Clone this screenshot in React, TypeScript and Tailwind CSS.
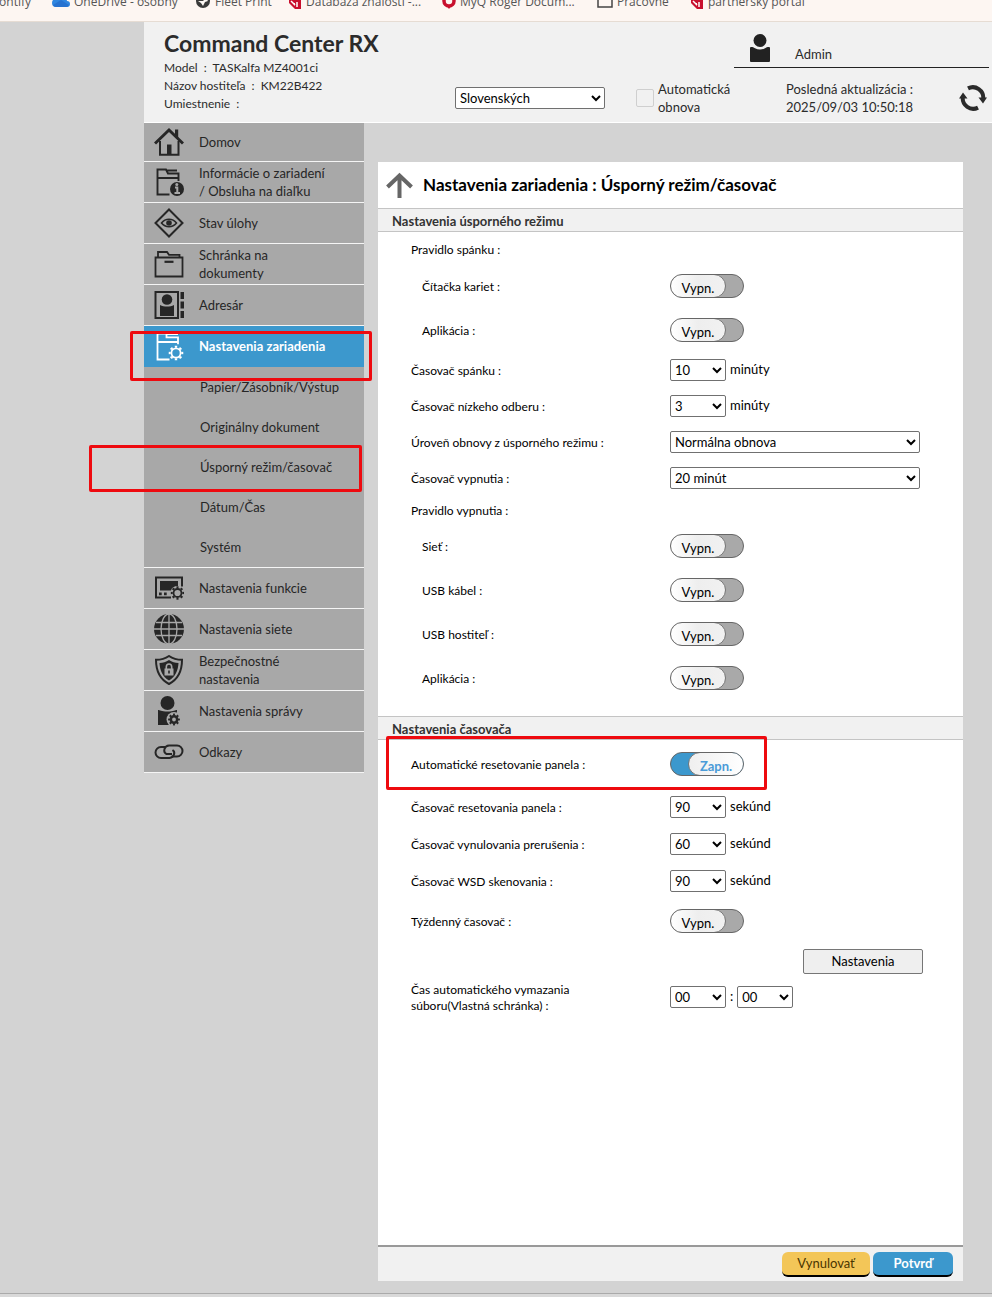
import { useState, type ReactNode } from "react";
import clsx from "clsx";

/* ---------- Icons ---------- */

// Ring with eight teeth, drawn as a dashed outer circle
function Gear({ cx, cy, r = 4.6, width = 1.8 }: { cx: number; cy: number; r?: number; width?: number }) {
  return (
    <g>
      <circle cx={cx} cy={cy} r={r} strokeWidth={width} />
      <circle cx={cx} cy={cy} r={r + 1.7} strokeWidth="2" pathLength="80" strokeDasharray="5 5" strokeDashoffset="2.5" />
    </g>
  );
}

function Icon({ children }: { children: ReactNode }) {
  return (
    <svg viewBox="0 0 30 30" className="h-[30px] w-[30px] shrink-0" fill="none" stroke="currentColor" strokeWidth="1.6" aria-hidden="true">
      {children}
    </svg>
  );
}

function HomeIcon() {
  return (
    <Icon>
      <path d="M1 16.5 15 3l14 13.5" strokeWidth="3" />
      <path d="M21 8V2.500h3.200V11" fill="currentColor" stroke="none" />
      <path d="M6 14v13.800h18.500V14" strokeWidth="2" />
      <path d="M13 17.500h4.500v10H13z" fill="currentColor" stroke="none" />
    </Icon>
  );
}

function DeviceInfoIcon() {
  return (
    <Icon>
      <path d="M15.500 27.500h-12v-25h8.500l2 4h10.500v7.500M3.500 11h21M13 3.500h10" strokeWidth="1.900" />
      <circle cx="23" cy="22" r="7" fill="currentColor" stroke="none" />
      <path d="M21 20.500h2.300v5.500M20.500 26h5.500" stroke="#a8a8a8" strokeWidth="2" />
      <circle cx="22.800" cy="17.500" r="1.500" fill="#a8a8a8" stroke="none" />
    </Icon>
  );
}

function JobStatusIcon() {
  return (
    <Icon>
      <path d="M15 1.500 28.500 15 15 28.500 1.500 15z" strokeWidth="2" />
      <path d="M7.500 15c4-5 11-5 15 0-4 5-11 5-15 0z" />
      <circle cx="15" cy="15" r="2.800" fill="currentColor" stroke="none" />
    </Icon>
  );
}

function BoxIcon() {
  return (
    <Icon>
      <path d="M1.500 8.500h27v19h-27zM4 8.500V3h9l2 2.800h10.500v2.700" strokeWidth="1.800" />
      <path d="M10.500 12.800h9" strokeWidth="2.200" />
    </Icon>
  );
}

function AddressIcon() {
  return (
    <Icon>
      <path d="M1.500 2h22.500v26H1.500z" strokeWidth="2" />
      <circle cx="13" cy="9.500" r="5.300" fill="currentColor" stroke="none" />
      <path d="M6 15c4 2 10 2 14 0v11H6z" fill="currentColor" stroke="none" />
      <path d="M26.500 2h3.500v7h-3.500zM26.500 11.500h3.500v7h-3.500zM26.500 21h3.500v7h-3.500z" fill="currentColor" stroke="none" />
    </Icon>
  );
}

function DeviceSettingsIcon() {
  return (
    <Icon>
      <path d="M15.500 27.500h-12v-26h9v3.800h11.500v7M3.500 10h20.500M13 2h11" strokeWidth="1.800" />
      <Gear cx={22} cy={21} />
    </Icon>
  );
}

function FunctionIcon() {
  return (
    <Icon>
      <path d="M17 24.500H2V4.500h26v9" strokeWidth="2" />
      <path d="M6 8h18v5q-6 0-7 4.500H6z" fill="currentColor" stroke="none" />
      <path d="M5 19.500h2.700v2.700H5zM10 19.500h2.700v2.700H10z" fill="currentColor" stroke="none" />
      <Gear cx={23.500} cy={20} r={4} />
    </Icon>
  );
}

function NetworkIcon() {
  return (
    <Icon>
      <circle cx="15" cy="15" r="15" fill="currentColor" stroke="none" />
      <g stroke="#a8a8a8" strokeWidth="1.300">
        <path d="M15 0v30M0 15h30M2 8.500h26M2 21.500h26" />
        <ellipse cx="15" cy="15" rx="8" ry="15" />
      </g>
    </Icon>
  );
}

function SecurityIcon() {
  return (
    <Icon>
      <path d="M15 1c4 2.800 8.500 3.800 13 3.800 0 10.200-3 19-13 24.200C5 23.800 2 15 2 4.800 6.500 4.800 11 3.800 15 1z" strokeWidth="2" />
      <path d="M15 5c3 2 6 2.700 9.500 3-.4 7.500-3 13.500-9.500 17.500C8.500 21.500 5.900 15.500 5.500 8 9 7.700 12 7 15 5z" fill="currentColor" stroke="none" />
      <path d="M12.300 14v-2c0-4 5.400-4 5.400 0v2" stroke="#a8a8a8" />
      <path d="M10.500 13.500h9v7h-9z" fill="#a8a8a8" stroke="none" />
      <path d="M15 15.500v3" />
    </Icon>
  );
}

function ManagementIcon() {
  return (
    <Icon>
      <circle cx="13.500" cy="7" r="7" fill="currentColor" stroke="none" />
      <path d="M4 14c2 0 3 1.500 9.500 1.500S21 14 23 14v15H4z" fill="currentColor" stroke="none" />
      <circle cx="20" cy="23.500" r="7.500" fill="#a8a8a8" stroke="none" />
      <Gear cx={20} cy={23.500} r={3.200} width={2.600} />
    </Icon>
  );
}

function LinksIcon() {
  return (
    <Icon>
      <path d="M12 10H7a5.500 5.500 0 0 0 0 11h8.500a5 5 0 0 0 4.500-3.500q1-3-1.500-4.500" strokeWidth="2" />
      <path d="M17.500 19.500h5.500a5.500 5.500 0 0 0 0-11h-8a5 5 0 0 0-4.500 3.500q-1 3.500 2 5H18" strokeWidth="2" />
    </Icon>
  );
}

function UserIcon() {
  return (
    <svg viewBox="0 0 20 28" className="h-7 w-5" fill="#222" aria-hidden="true">
      <circle cx="10" cy="6.500" r="6.500" />
      <path d="M1 13c2 0 2.500.500 4 1.300 3 1.700 7 1.700 10 0 1.500-.8 2-1.300 4-1.300q1 0 1 1v13q0 1-1 1H1q-1 0-1-1V14q0-1 1-1z" />
    </svg>
  );
}

function RefreshIcon() {
  return (
    <svg viewBox="0 0 28 26" className="h-[26px] w-7" fill="none" stroke="#2b2b2b" strokeWidth="4" aria-hidden="true">
      <path d="M9 3.400A10.500 10.500 0 0 1 24.200 14M19 22.600A10.500 10.500 0 0 1 3.800 12" />
      <path d="M19.500 12.500H28l-4 6zM0 13.500h8.500l-4.500-6z" fill="#2b2b2b" stroke="none" />
    </svg>
  );
}

function MyqMark() {
  return (
    <svg viewBox="0 0 14 16" className="h-4 w-3.5" fill="#c8102e" aria-hidden="true">
      <path d="M1 1h12v8H1z" />
      <path d="M1 9h4l2 3V8l6 1v6H7z" />
      <path d="m3 7 4 4M9 8v5" stroke="#fff" strokeWidth="1.500" />
    </svg>
  );
}

/* ---------- Bookmarks bar ---------- */

const bookmarks: { label: string; gap: string; icon?: ReactNode }[] = [
  { label: "Frontify", gap: "w-[64px]" },
  {
    label: "OneDrive - osobný",
    gap: "w-[143px]",
    icon: (
      <svg viewBox="0 0 18 16" className="h-4 w-[18px]" aria-hidden="true">
        <path d="M4 13a4 4 0 0 1 0-8 6 6 0 0 1 11 2 3 3 0 0 1 0 6z" fill="#2f86e0" />
        <path d="M1 11 9 6l8 5q-1 2-3 2H4q-2 0-3-2z" fill="#2672d0" />
      </svg>
    ),
  },
  {
    label: "Fleet Print",
    gap: "w-[93px]",
    icon: (
      <svg viewBox="0 0 16 16" className="h-4 w-4" aria-hidden="true">
        <circle cx="8" cy="7" r="7" fill="#3a3a3a" />
        <path d="M3 7h5l3-3 2 3-3 1-2 4-2-3z" fill="#fdf8f4" />
      </svg>
    ),
  },
  { label: "Databáza znalostí -...", gap: "w-[154px]", icon: <MyqMark /> },
  {
    label: "MyQ Roger Docum...",
    gap: "w-[155px]",
    icon: (
      <svg viewBox="0 0 14 16" className="h-4 w-3.5" aria-hidden="true">
        <circle cx="7" cy="7" r="5" fill="none" stroke="#c8102e" strokeWidth="3.500" />
        <path d="m4 11 3 4 3-4z" fill="#c8102e" />
      </svg>
    ),
  },
  {
    label: "Pracovné",
    gap: "w-[93px]",
    icon: (
      <svg viewBox="0 0 16 16" className="h-4 w-4" fill="none" stroke="#444" strokeWidth="1.500" aria-hidden="true">
        <path d="M1 2h5l2 2h7v9H1z" />
      </svg>
    ),
  },
  { label: "partnerský portál", gap: "w-[130px]", icon: <MyqMark /> },
];

function BookmarksBar() {
  return (
    <nav className="h-[22px] overflow-hidden border-b border-[#e6dcd3] bg-[#fdf6f2]">
      <ul className="-mt-[7px] -ml-3 flex font-['Open_Sans',sans-serif] text-xs leading-[18px] text-[#555]">
        {bookmarks.map((b) => (
          <li key={b.label} className={clsx("shrink-0", b.gap)}>
            <a href="#" className="flex items-center gap-1 whitespace-nowrap">
              {b.icon}
              {b.label}
            </a>
          </li>
        ))}
      </ul>
    </nav>
  );
}

/* ---------- Form parts ---------- */

// Red frame that marks a step in the guide
function Marker({ className }: { className: string }) {
  return <span className={clsx("pointer-events-none absolute z-10 rounded-xs border-3 border-[#ee0a0f]", className)} />;
}

function Select({ id, value, className, label }: { id?: string; value: string; className: string; label?: string }) {
  return (
    <select
      id={id}
      aria-label={label}
      defaultValue={value}
      className={clsx("h-[22px] rounded-xs border border-[#707070] bg-white text-black", className)}
    >
      <option>{value}</option>
    </select>
  );
}

function Toggle({ id, initial = false }: { id: string; initial?: boolean }) {
  const [on, setOn] = useState(initial);
  return (
    <label
      className={clsx(
        "relative flex h-6 w-[74px] cursor-pointer overflow-hidden rounded-full border border-[#666]",
        on ? "justify-end bg-[#3c98cd]" : "bg-[#a9a9a9]"
      )}
    >
      <input id={id} type="checkbox" checked={on} onChange={() => setOn(!on)} className="sr-only" />
      <span
        className={clsx(
          "-my-px h-6 w-14 rounded-full border border-[#777] bg-linear-to-r pt-1 text-center text-[13px] leading-[18px]",
          on
            ? "-mr-px from-[#efefef] to-white font-bold text-[#4a9bd8]"
            : "-ml-px from-white via-[#eeeeee] to-[#f1f1f1] text-black"
        )}
      >
        {on ? "Zapn." : "Vypn."}
      </span>
    </label>
  );
}

function Row({ id, label, height = "h-9", nested, children }: {
  id?: string;
  label: ReactNode;
  height?: string;
  nested?: boolean;
  children?: ReactNode;
}) {
  return (
    <div className={clsx("relative flex items-center", height)}>
      <label htmlFor={id} className={clsx("w-[292px] shrink-0 pt-0.5 leading-4", nested ? "pl-11" : "pl-[33px]")}>
        {label}
      </label>
      <div className="flex items-center gap-1 text-[13px]">{children}</div>
    </div>
  );
}

function SectionTitle({ children }: { children: ReactNode }) {
  return (
    <h3 className="h-6 border-y border-[#c4c4c4] bg-[#f1f1f1] pl-3.5 text-[13px] leading-6 font-bold text-[#333]">
      {children}
    </h3>
  );
}

/* ---------- Header & menu ---------- */

function Header() {
  return (
    <header className="ml-36 flex h-[101px] border-b border-white bg-[#f1f1f1] text-[#2b2b2b]">
      <div className="w-[311px] shrink-0 pt-1.5 pl-5">
        <h1 className="text-[23px] leading-[30px] font-bold whitespace-nowrap">Command Center RX</h1>
        <p className="pt-px text-xs leading-[18px]">
          Model&nbsp; :&nbsp; TASKalfa MZ4001ci
          <br />
          Názov hostiteľa&nbsp; :&nbsp; KM22B422
          <br />
          Umiestnenie&nbsp; :
        </p>
      </div>
      <div className="flex-1 text-[13px]">
        <div className="mr-[3px] ml-auto flex h-[46px] w-[255px] items-end border-b border-[#222] pb-[5px] pl-4">
          <UserIcon />
          <span className="pl-[25px] leading-4">Admin</span>
        </div>
        <div className="flex items-center pt-3 leading-[18px]">
          <Select label="Jazyk" value="Slovenských" className="w-[150px]" />
          <label className="ml-[31px] flex w-[150px] items-center gap-1">
            <input type="checkbox" className="h-[18px] w-[18px] appearance-none rounded-xs border border-[#cfcfcf]" />
            <span>
              Automatická
              <br />
              obnova
            </span>
          </label>
          <p className="flex-1 whitespace-nowrap">
            Posledná aktualizácia :
            <br />
            2025/09/03 10:50:18
          </p>
          <button type="button" aria-label="Obnoviť" className="mr-[5px]">
            <RefreshIcon />
          </button>
        </div>
      </div>
    </header>
  );
}

const itemClass = "relative flex items-center gap-[15px] border-b border-[#f5f5f5] pl-2.5 leading-[18px]";

function MenuItem({ icon, children, height = "h-[41px]" }: { icon: ReactNode; children: ReactNode; height?: string }) {
  return (
    <li>
      <a href="#" className={clsx(itemClass, height)}>
        {icon}
        <span>{children}</span>
      </a>
    </li>
  );
}

const subItems = ["Papier/Zásobník/Výstup", "Originálny dokument", "Úsporný režim/časovač", "Dátum/Čas", "Systém"];

function Sidebar() {
  return (
    <nav className="w-[220px] shrink-0 self-start bg-[#a8a8a8] text-[13px] text-[#262626]">
      <ul>
        <MenuItem icon={<HomeIcon />} height="h-[39px]">Domov</MenuItem>
        <MenuItem icon={<DeviceInfoIcon />}>Informácie o zariadení<br />/ Obsluha na diaľku</MenuItem>
        <MenuItem icon={<JobStatusIcon />}>Stav úlohy</MenuItem>
        <MenuItem icon={<BoxIcon />}>Schránka na<br />dokumenty</MenuItem>
        <MenuItem icon={<AddressIcon />}>Adresár</MenuItem>
        <li>
          <a href="#" className="relative flex h-[41px] items-center gap-[15px] bg-[#3c98cd] pl-2.5 font-bold text-white">
            <DeviceSettingsIcon />
            Nastavenia zariadenia
            <Marker className="top-[5px] -left-3.5 h-[50px] w-[242px]" />
          </a>
          <ul className="border-b border-[#f5f5f5]">
            {subItems.map((item) => (
              <li key={item}>
                <a href="#" className="relative flex h-10 items-center pt-0.5 pl-14">
                  {item}
                  {item.startsWith("Úsporný") && <Marker className="-top-0.5 -left-[55px] h-[47px] w-[273px]" />}
                </a>
              </li>
            ))}
          </ul>
        </li>
        <MenuItem icon={<FunctionIcon />}>Nastavenia funkcie</MenuItem>
        <MenuItem icon={<NetworkIcon />}>Nastavenia siete</MenuItem>
        <MenuItem icon={<SecurityIcon />}>Bezpečnostné<br />nastavenia</MenuItem>
        <MenuItem icon={<ManagementIcon />}>Nastavenia správy</MenuItem>
        <MenuItem icon={<LinksIcon />}>Odkazy</MenuItem>
      </ul>
    </nav>
  );
}

/* ---------- Settings panel ---------- */

function SettingsPanel() {
  return (
    <main className="mt-[39px] mr-[29px] mb-3 ml-3.5 flex flex-1 flex-col bg-white text-xs text-black">
      <div className="flex h-[46px] items-center gap-2.5 pl-2">
        <a href="#" aria-label="Späť">
          <svg viewBox="0 0 27 26" className="h-[26px] w-[27px]" fill="none" stroke="#666" strokeWidth="4" aria-hidden="true">
            <path d="M13.500 26V4M1.500 15l12-11.500L25.500 15" />
          </svg>
        </a>
        <h2 className="text-[17px] leading-6 font-bold whitespace-nowrap">Nastavenia zariadenia : Úsporný režim/časovač</h2>
      </div>

      <form className="flex flex-1 flex-col">
        <SectionTitle>Nastavenia úsporného režimu</SectionTitle>
        <Row label="Pravidlo spánku :" height="h-8 pt-0.5" />
        <Row id="card" label="Čítačka kariet :" height="h-11" nested>
          <Toggle id="card" />
        </Row>
        <Row id="sleep-app" label="Aplikácia :" height="h-11" nested>
          <Toggle id="sleep-app" />
        </Row>
        <Row id="sleep" label="Časovač spánku :">
          <Select id="sleep" value="10" className="w-14" /> minúty
        </Row>
        <Row id="low-power" label="Časovač nízkeho odberu :">
          <Select id="low-power" value="3" className="w-14" /> minúty
        </Row>
        <Row id="recovery" label="Úroveň obnovy z úsporného režimu :">
          <Select id="recovery" value="Normálna obnova" className="w-[250px]" />
        </Row>
        <Row id="power-off" label="Časovač vypnutia :">
          <Select id="power-off" value="20 minút" className="w-[250px]" />
        </Row>
        <Row label="Pravidlo vypnutia :" height="h-7" />
        <Row id="network" label="Sieť :" height="h-11" nested>
          <Toggle id="network" />
        </Row>
        <Row id="usb-cable" label="USB kábel :" height="h-11" nested>
          <Toggle id="usb-cable" />
        </Row>
        <Row id="usb-host" label="USB hostiteľ :" height="h-11" nested>
          <Toggle id="usb-host" />
        </Row>
        <Row id="off-app" label="Aplikácia :" height="h-11" nested>
          <Toggle id="off-app" />
        </Row>

        <div className="pt-4">
          <SectionTitle>Nastavenia časovača</SectionTitle>
        </div>
        <Row id="auto-reset" label="Automatické resetovanie panela :" height="h-12">
          <Toggle id="auto-reset" initial />
          <Marker className="-top-1 left-2 h-[54px] w-[381px]" />
        </Row>
        <Row id="panel-reset" label="Časovač resetovania panela :" height="h-[37px]">
          <Select id="panel-reset" value="90" className="w-14" /> sekúnd
        </Row>
        <Row id="interrupt" label="Časovač vynulovania prerušenia :" height="h-[37px]">
          <Select id="interrupt" value="60" className="w-14" /> sekúnd
        </Row>
        <Row id="wsd" label="Časovač WSD skenovania :" height="h-[37px]">
          <Select id="wsd" value="90" className="w-14" /> sekúnd
        </Row>
        <Row id="weekly" label="Týždenný časovač :" height="h-11">
          <Toggle id="weekly" />
        </Row>
        <div className="flex h-9 items-center justify-end pr-10">
          <button type="button" className="h-[25px] w-[120px] rounded-xs border border-[#767676] bg-[#efefef] pt-0.5 text-[13px]">
            Nastavenia
          </button>
        </div>
        <Row id="delete-hour" label={<>Čas automatického vymazania<br />súboru(Vlastná schránka) :</>}>
          <Select id="delete-hour" value="00" className="w-14" /> :
          <Select label="Minúty" value="00" className="w-14" />
        </Row>

        <div className="mt-auto flex h-9 items-center justify-end gap-[3px] border-t-2 border-[#999] bg-[#f1f1f1] pr-2.5 text-[13px]">
          <button type="reset" className="h-[25px] w-[88px] rounded-md border-b-2 border-black bg-[#f3c658] pt-0.5 text-[#4a3500]">
            Vynulovať
          </button>
          <button type="submit" className="h-[25px] w-20 rounded-md border-b-2 border-black bg-[#3c98cd] pt-0.5 font-bold text-white">
            Potvrď
          </button>
        </div>
      </form>
    </main>
  );
}

export default function App() {
  return (
    <div className="flex min-h-screen flex-col bg-[#d3d3d3] font-[Lato,'Open_Sans',sans-serif]">
      <BookmarksBar />
      <Header />
      <div className="ml-36 flex flex-1">
        <Sidebar />
        <SettingsPanel />
      </div>
      <footer className="h-1 border-t border-[#aaa] bg-[#d9d9d9]" />
    </div>
  );
}
